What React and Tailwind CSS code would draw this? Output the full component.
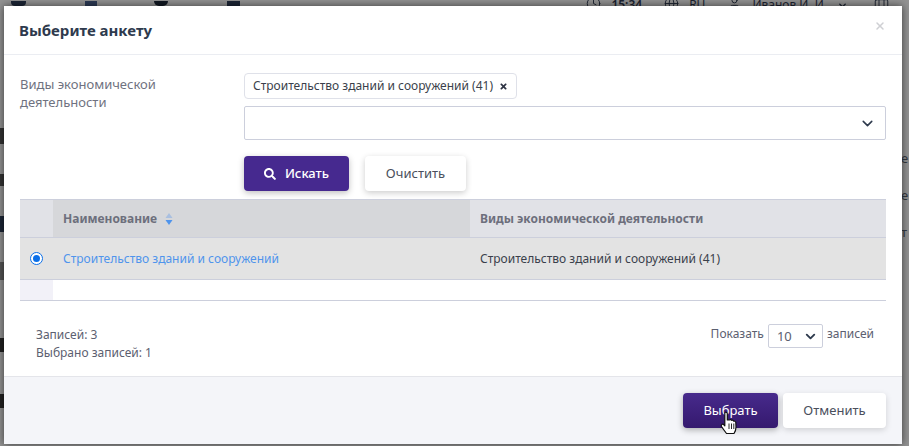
import { Search, X, ChevronDown, Clock, Globe, User, Briefcase } from 'lucide-react';
import { FaSearch, FaTimes } from 'react-icons/fa';

function SortIcon() {
  return (
    <svg width="8" height="12" viewBox="0 0 8 12" className="ml-[8px]">
      <path d="M4 0 L7.5 5 L0.5 5 Z" fill="#a9bfe0" />
      <path d="M0.5 7 L7.5 7 L4 12 Z" fill="#4f94ec" />
    </svg>
  );
}

function HandCursor() {
  return (
    <svg width="18" height="24" viewBox="0 0 18 24" className="absolute left-[720px] top-[411px]">
      <path
        d="M5 1.5 C6.2 0.8 7.3 1.5 7.3 2.8 L7.3 9 L9.5 9 C10 8.3 11.3 8.4 11.6 9.4 C12.2 8.9 13.4 9.2 13.6 10.2 C14.3 9.9 15.6 10.2 15.8 11.4 L16 16 C16 19 15 21 14 22.5 L6.5 22.5 C5 20.5 3.5 18.5 1.5 15.5 C0.7 14 2.2 12.6 3.6 13.6 L4.8 14.8 L4.8 2.5 Z"
        fill="#ffffff"
        stroke="#111111"
        strokeWidth="1.2"
        strokeLinejoin="round"
      />
      <path d="M9 12.5 V18 M11.5 12.5 V18 M13.8 12.5 V18" stroke="#111111" strokeWidth="0.9" />
    </svg>
  );
}

function TopBar() {
  return (
    <div className="h-[6px] overflow-hidden relative text-[#1c2230]">
      <div className="flex items-end h-[6px] pl-[11px] gap-[60px]">
        <div className="w-[15px] h-[5px] bg-[#1c2636] rounded-b-sm" />
        <div className="w-[12px] h-[5px] bg-[#2c3a55] ml-[-1px]" />
        <div className="w-[14px] h-[5px] bg-[#111822] rounded-b-full ml-[-3px]" />
        <div className="w-[13px] h-[5px] bg-[#1c2636] ml-[-1px]" />
        <div className="ml-auto flex items-end gap-[10px] pr-[20px] -mb-[5px] text-[12px] leading-[12px]">
          <Clock size={15} strokeWidth={1.5} />
          <span className="font-semibold mr-[12px]">15:34</span>
          <Globe size={15} strokeWidth={1.5} />
          <span className="mr-[12px]">RU</span>
          <User size={15} strokeWidth={1.5} />
          <span>Иванов И. И.</span>
          <ChevronDown size={11} strokeWidth={3} className="mr-[16px]" />
          <Briefcase size={15} strokeWidth={1.5} />
        </div>
      </div>
    </div>
  );
}

export default function App() {
  return (
    <div className="relative w-[909px] h-[446px] overflow-hidden bg-[#929292] font-['Noto_Sans',sans-serif]">
      <TopBar />
      <div className="flex justify-between">
        <div className="flex flex-col pt-[122px] gap-[30px]">
          <div className="w-[4px] h-[16px] bg-[#333]" />
          <div className="w-[4px] h-[12px] bg-[#333]" />
          <div className="w-[4px] h-[16px] bg-[#1c2636]" />
          <div className="w-[4px] h-[18px] bg-[#555]" />
          <div className="w-[4px] h-[14px] mt-[28px] bg-[#222]" />
          <div className="w-[4px] h-[14px] mt-[12px] bg-[#222]" />
        </div>
        <div className="flex flex-col pt-[143px] gap-[19px] text-[#33383f] text-[13px] leading-[18px] w-[7px] overflow-hidden">
          <span className="-ml-[1px]">е</span>
          <span className="-ml-[1px]">е</span>
          <span className="-ml-[1px]">т</span>
        </div>
      </div>

      <div className="absolute left-[4px] top-[6px] w-[898px] h-[438px] bg-white flex flex-col shadow-[0_0_8px_rgba(0,0,0,0.6)]">
        <div className="h-[49px] shrink-0 border-b border-[#ebedf2] flex items-center justify-between pl-[15px] pr-[16px]">
          <h2 className="text-[15px] leading-[20px] font-bold text-[#2e3a4d]">Выберите анкету</h2>
          <X size={12} strokeWidth={3} className="text-[#cfd0d4] -mt-[8px]" />
        </div>

        <div className="flex-1 flex flex-col pl-[16px] pr-[16px]">
          <div className="flex pt-[17px]">
            <div className="w-[224px] shrink-0 pt-[3px] text-[13px] leading-[18px] text-[#6f7280] pl-[-1px]">
              Виды экономической
              <br />
              деятельности
            </div>
            <div className="flex-1">
              <div className="inline-flex items-center h-[26px] px-[8px] border border-[#dfe1e9] rounded-[4px] text-[12px] text-[#3a3f4b]">
                Строительство зданий и сооружений (41)
                <FaTimes size={9} className="ml-[6px] text-[#2e3444]" />
              </div>
              <div className="mt-[7px] h-[34px] border border-[#cccfdc] rounded-[2px] flex items-center justify-end pr-[9px]">
                <ChevronDown size={17} strokeWidth={2.2} className="text-[#2e3a4d]" />
              </div>
              <div className="mt-[16px] flex gap-[16px]">
                <button className="w-[105px] h-[35px] rounded-[4px] bg-[#46298f] text-white text-[13px] font-medium flex items-center justify-center gap-[9px] shadow-[0_2px_6px_rgba(0,0,0,0.25)]">
                  <FaSearch size={12} />
                  Искать
                </button>
                <button className="w-[101px] h-[35px] rounded-[4px] bg-white text-[#4a4f5c] text-[13px] shadow-[0_2px_6px_rgba(0,0,0,0.2)]">
                  Очистить
                </button>
              </div>
            </div>
          </div>

          <div className="mt-[8px] border-t border-b border-[#cccfdc] w-[866px]">
            <div className="flex h-[38px] border-b border-[#cccfdc] text-[12px] font-bold text-[#6d6f7c]">
              <div className="w-[33px] bg-[#e1e2e7]" />
              <div className="w-[417px] bg-[#d6d7da] flex items-center pl-[10px]">
                Наименование
                <SortIcon />
              </div>
              <div className="flex-1 bg-[#e1e2e7] flex items-center pl-[10px]">Виды экономической деятельности</div>
            </div>
            <div className="flex h-[42px] border-b border-[#cccfdc] bg-[#e3e3e3] text-[12px]">
              <div className="w-[33px] flex items-center justify-center">
                <span className="w-[13px] h-[13px] rounded-full border-[1.5px] border-[#0b6fe8] bg-white flex items-center justify-center">
                  <span className="w-[7px] h-[7px] rounded-full bg-[#0b6fe8]" />
                </span>
              </div>
              <div className="w-[417px] flex items-center pl-[10px] text-[#4f94ec]">Строительство зданий и сооружений</div>
              <div className="flex-1 flex items-center pl-[10px] text-[#3a3f4b]">Строительство зданий и сооружений (41)</div>
            </div>
            <div className="flex h-[20px]">
              <div className="w-[33px] bg-[#f2f1f8]" />
            </div>
          </div>

          <div className="flex justify-between pt-[24px] pl-[16px] text-[12px] leading-[18px] text-[#5c6070]">
            <div className="pt-[1px]">
              <div>Записей: 3</div>
              <div>Выбрано записей: 1</div>
            </div>
            <div className="flex items-start pr-[12px]">
              <span>Показать</span>
              <div className="mx-[4px] -mt-[1px] w-[55px] h-[24px] border border-[#cccfdc] rounded-[2px] flex items-center justify-between pl-[8px] pr-[4px] text-[13px]">
                10
                <ChevronDown size={15} strokeWidth={3} className="text-[#2e3a4d]" />
              </div>
              <span>записей</span>
            </div>
          </div>
        </div>

        <div className="h-[68px] shrink-0 bg-[#f4f5f9] border-t border-[#e4e5ea] flex items-start justify-end gap-[5px] pt-[16px] pr-[16px]">
          <button className="w-[95px] h-[35px] rounded-[4px] bg-gradient-to-b from-[#472a8c] to-[#35196e] text-white text-[13px] shadow-[0_2px_6px_rgba(0,0,0,0.3)]">
            Выбрать
          </button>
          <button className="w-[103px] h-[35px] rounded-[4px] bg-white text-[#4a4f5c] text-[13px] shadow-[0_2px_6px_rgba(0,0,0,0.15)]">
            Отменить
          </button>
        </div>
      </div>
      <HandCursor />
    </div>
  );
}
